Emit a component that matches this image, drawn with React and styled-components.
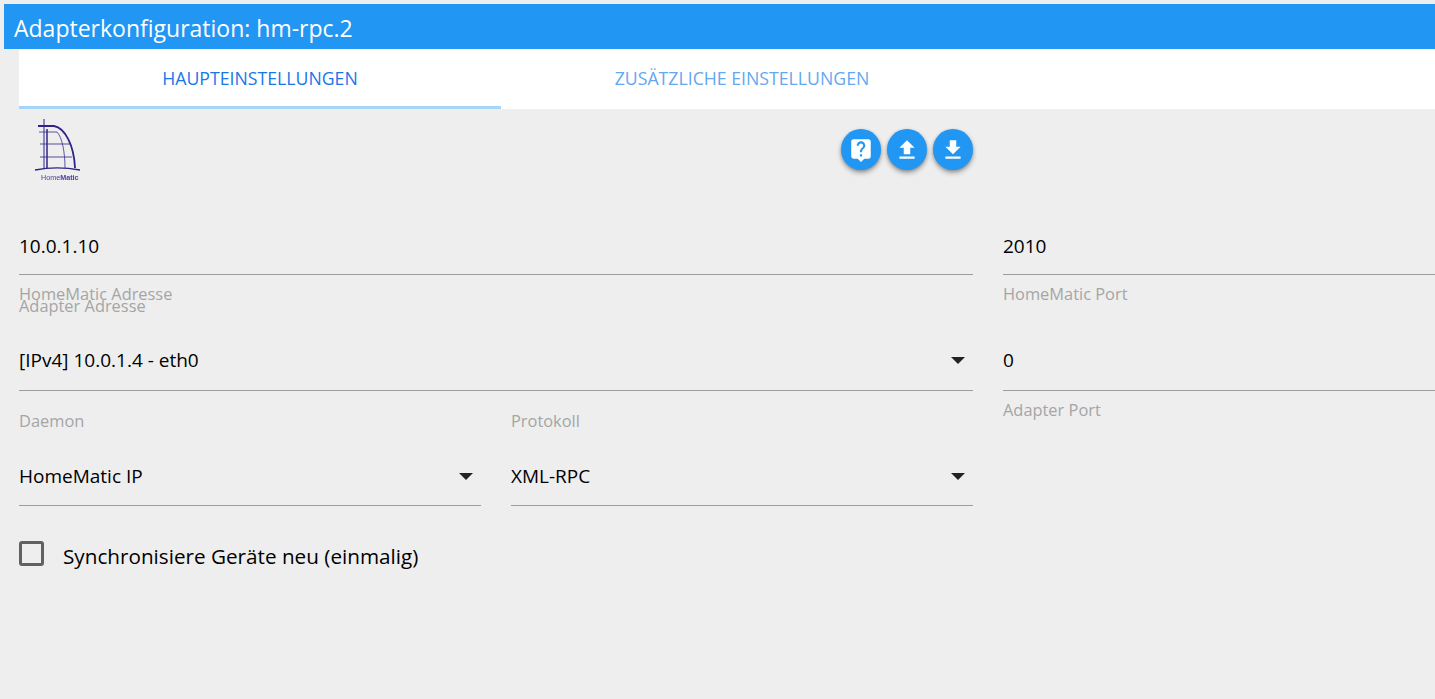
import React from 'react';
import styled, { createGlobalStyle } from 'styled-components';
import { MdLiveHelp, MdFileUpload, MdFileDownload } from 'react-icons/md';

const GlobalStyle = createGlobalStyle`
  html, body {
    margin: 0;
    height: 100%;
    background: #eeeeee;
    overflow: hidden;
  }
  body {
    font-family: "Open Sans", "Noto Sans", sans-serif;
  }
`;

const Page = styled.div`
  width: 1435px;
  height: 699px;
  padding-top: 4px;
  box-sizing: border-box;
  background: #eeeeee;
  overflow: hidden;
`;

const TitleBar = styled.div`
  margin-left: 4px;
  height: 45px;
  padding-left: 10px;
  background: #2196f3;
  color: #fff;
  font-size: 23px;
  line-height: 48px;
  white-space: nowrap;
`;

const Content = styled.div`
  padding-left: 19px;
`;

const Tabs = styled.div`
  display: flex;
  height: 60px;
  background: #fff;
`;

const Tab = styled.div`
  width: 482px;
  box-sizing: border-box;
  display: flex;
  align-items: center;
  justify-content: center;
  font-size: 17.7px;
  color: ${(p) => (p.$active ? '#1976e8' : '#64a8f0')};
  border-bottom: 3px solid ${(p) => (p.$active ? '#a6d5fa' : 'transparent')};
`;

const Toolbar = styled.div`
  width: 954px;
  height: 106px;
  display: flex;
  justify-content: space-between;
  align-items: flex-start;
`;

const Logo = styled.svg`
  display: block;
  margin: 8px 0 0 14px;
  filter: blur(0.35px);
`;

const LogoText = styled.text`
  font-family: "Liberation Sans", sans-serif;
  font-size: 7.2px;
  fill: #4a4399;
`;

const Actions = styled.div`
  display: flex;
  gap: 5.5px;
  margin-top: 20px;
`;

const RoundButton = styled.button`
  width: 40.4px;
  height: 41px;
  padding: 0;
  border: 0;
  border-radius: 50%;
  background: #2196f3;
  color: #fff;
  display: flex;
  align-items: center;
  justify-content: center;
  box-shadow: 0 3px 5px rgba(0, 0, 0, 0.3), 0 1px 3px rgba(0, 0, 0, 0.2);
`;

const FormGrid = styled.div`
  display: grid;
  grid-template-columns: 954px 480px;
  column-gap: 30px;
  align-items: start;
`;

const Column = styled.div`
  display: flex;
  flex-direction: column;
`;

const SplitRow = styled.div`
  display: grid;
  grid-template-columns: 462px 462px;
  column-gap: 30px;
  margin-top: ${(p) => p.$top || 0}px;
`;

const Field = styled.div`
  display: flex;
  flex-direction: column;
  margin-top: ${(p) => p.$top || 0}px;
`;

const Caption = styled.div`
  height: 20px;
  font-size: 16.4px;
  line-height: 20px;
  color: #a5a5a5;
  white-space: nowrap;
`;

const HelperCaption = styled(Caption)`
  margin-top: 9px;
`;

const Value = styled.div`
  height: ${(p) => p.$height}px;
  box-sizing: border-box;
  display: flex;
  align-items: flex-start;
  justify-content: space-between;
  padding-top: ${(p) => p.$pad}px;
  border-bottom: 1px solid #9e9e9e;
  font-size: 19px;
  line-height: 24px;
  color: #000;
  white-space: nowrap;
`;

const Arrow = styled.span`
  width: 0;
  height: 0;
  margin: 9px 8px 0 0;
  border-left: 7px solid transparent;
  border-right: 7px solid transparent;
  border-top: 7px solid #222;
`;

const CheckRow = styled.label`
  display: flex;
  align-items: flex-start;
  gap: 19px;
  margin-top: 35px;
  font-size: 20.7px;
  line-height: 28px;
  color: #000;
`;

const CheckText = styled.span`
  margin-top: 1px;
`;

const CheckBox = styled.span`
  width: 25px;
  height: 25px;
  box-sizing: border-box;
  border: 3px solid #616161;
  border-radius: 3px;
`;

function HomeMaticLogo() {
  return (
    <Logo width="50" height="66" viewBox="0 0 50 66">
      <g fill="none" stroke="#2e2487">
        <path d="M11 2V52" strokeWidth="1" />
        <path d="M5 9H21C32 11 41 28 42 51" strokeWidth="1.8" />
        <path d="M6 15H24C29 20 32 35 32 51" strokeWidth="1" opacity="0.75" />
        <path d="M7 27H37" strokeWidth="1" opacity="0.8" />
        <path d="M7 40H39" strokeWidth="1" opacity="0.8" />
        <path d="M14 12V51" strokeWidth="1.5" />
        <path d="M2 53C15 50.5 33 50.5 47 53" strokeWidth="1.4" />
      </g>
      <LogoText x="8" y="62.5">
        Home<tspan fontWeight="700">Matic</tspan>
      </LogoText>
    </Logo>
  );
}

export default function App() {
  return (
    <Page>
      <GlobalStyle />
      <TitleBar>Adapterkonfiguration: hm-rpc.2</TitleBar>
      <Content>
        <Tabs>
          <Tab $active>HAUPTEINSTELLUNGEN</Tab>
          <Tab>ZUSÄTZLICHE EINSTELLUNGEN</Tab>
        </Tabs>
        <Toolbar>
          <HomeMaticLogo />
          <Actions>
            <RoundButton><MdLiveHelp size={26} /></RoundButton>
            <RoundButton><MdFileUpload size={26} /></RoundButton>
            <RoundButton><MdFileDownload size={26} /></RoundButton>
          </Actions>
        </Toolbar>
        <FormGrid>
          <Column>
            <Field>
              <Value $height={60} $pad={19}>10.0.1.10</Value>
              <HelperCaption>HomeMatic Adresse</HelperCaption>
            </Field>
            <Field $top={-8}>
              <Caption>Adapter Adresse</Caption>
              <Value $height={75} $pad={32}>
                [IPv4] 10.0.1.4 - eth0
                <Arrow />
              </Value>
            </Field>
            <SplitRow $top={20}>
              <Field>
                <Caption>Daemon</Caption>
                <Value $height={75} $pad={33}>
                  HomeMatic IP
                  <Arrow />
                </Value>
              </Field>
              <Field>
                <Caption>Protokoll</Caption>
                <Value $height={75} $pad={33}>
                  XML-RPC
                  <Arrow />
                </Value>
              </Field>
            </SplitRow>
            <CheckRow>
              <CheckBox />
              <CheckText>Synchronisiere Geräte neu (einmalig)</CheckText>
            </CheckRow>
          </Column>
          <Column>
            <Field>
              <Value $height={60} $pad={19}>2010</Value>
              <HelperCaption>HomeMatic Port</HelperCaption>
            </Field>
            <Field $top={17}>
              <Value $height={70} $pad={27}>0</Value>
              <HelperCaption>Adapter Port</HelperCaption>
            </Field>
          </Column>
        </FormGrid>
      </Content>
    </Page>
  );
}
